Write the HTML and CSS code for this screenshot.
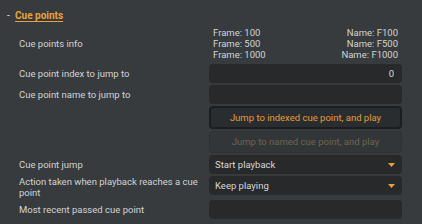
FILE: index.html
```html
<!DOCTYPE html>
<html>
<head>
<meta charset="utf-8">
<link rel="stylesheet" href="styles.css">
</head>
<body>
<div class="panel">
  <div class="header"><span class="dash">-</span><span class="title">Cue points</span></div>
  <div class="rows">
    <div class="row info-row">
      <div class="label">Cue points info</div>
      <div class="info">
        <div class="info-line"><span>Frame: 100</span><span>Name: F100</span></div>
        <div class="info-line"><span>Frame: 500</span><span>Name: F500</span></div>
        <div class="info-line"><span>Frame: 1000</span><span>Name: F1000</span></div>
      </div>
    </div>
    <div class="row">
      <div class="label">Cue point index to jump to</div>
      <div class="field num">0</div>
    </div>
    <div class="row">
      <div class="label">Cue point name to jump to</div>
      <div class="field"></div>
    </div>
    <div class="row">
      <div class="label"></div>
      <div class="btn primary">Jump to indexed cue point, and play</div>
    </div>
    <div class="row">
      <div class="label"></div>
      <div class="btn disabled">Jump to named cue point, and play</div>
    </div>
    <div class="row">
      <div class="label">Cue point jump</div>
      <div class="field select"><span>Start playback</span><svg class="arrow" width="7" height="4" viewBox="0 0 7 4"><polygon points="0,0 7,0 3.5,4" fill="#e8a23a"/></svg></div>
    </div>
    <div class="row two-line">
      <div class="label">Action taken when playback reaches a cue point</div>
      <div class="field select"><span>Keep playing</span><svg class="arrow" width="7" height="4" viewBox="0 0 7 4"><polygon points="0,0 7,0 3.5,4" fill="#e8a23a"/></svg></div>
    </div>
    <div class="row">
      <div class="label">Most recent passed cue point</div>
      <div class="field"></div>
    </div>
  </div>
</div>
</body>
</html>
```
FILE: styles.css
```css
html, body {
  margin: 0;
  padding: 0;
  background: #373b3e;
  width: 422px;
  height: 224px;
  overflow: hidden;
  font-family: Roboto, "Noto Sans", sans-serif;
}
.panel {
  padding-top: 9px;
}
.header {
  display: flex;
  align-items: center;
  height: 14px;
  padding-left: 7px;
  font-size: 10px;
  line-height: 14px;
}
.dash {
  color: #d8d8d8;
  width: 8px;
}
.title {
  color: #e8a23a;
  font-weight: 700;
  text-decoration: underline;
  text-underline-offset: 2px;
}
.rows {
  display: flex;
  flex-direction: column;
  gap: 2px;
  margin-top: 4px;
  padding-left: 19px;
}
.row {
  display: grid;
  grid-template-columns: 190px 193px;
  align-items: center;
}
.label {
  color: #d2d4d5;
  font-size: 9.5px;
  line-height: 11px;
}
.info-row {
  height: 33px;
  margin-bottom: 2px;
}
.info {
  padding: 0 4px;
  color: #d2d4d5;
  font-size: 9.5px;
  line-height: 11px;
}
.info-line {
  display: flex;
  justify-content: space-between;
}
.field {
  height: 19px;
  background: #27292b;
  border-radius: 4px;
  color: #d8d8d8;
  font-size: 9.5px;
  line-height: 19px;
  padding: 0 8px 0 6px;
  box-sizing: border-box;
}
.num {
  text-align: right;
}
.select {
  display: flex;
  align-items: center;
  justify-content: space-between;
}
.arrow {
  display: block;
  margin-right: -1px;
}
.btn {
  box-sizing: border-box;
  border-radius: 4px;
  text-align: center;
  font-size: 9.5px;
}
.primary {
  height: 23px;
  line-height: 19px;
  background: #2a2d30;
  border: 2px solid #1b1d1f;
  color: #e39d38;
}
.disabled {
  height: 22px;
  line-height: 20px;
  background: #333639;
  border: 1px solid #2f3235;
  color: #6b6552;
}
.two-line {
  height: 22px;
  align-items: start;
}
.two-line .field {
  align-self: start;
}
```
